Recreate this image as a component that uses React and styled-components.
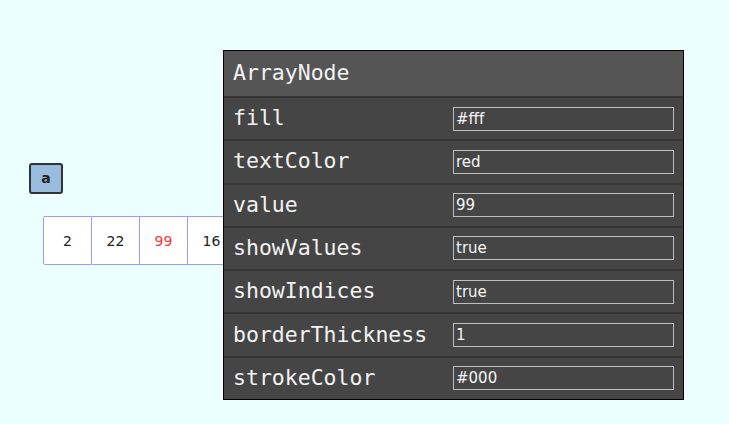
import React from "react";
import styled, { createGlobalStyle } from "styled-components";

const Global = createGlobalStyle`
  html, body { margin: 0; padding: 0; }
  body {
    width: 729px;
    height: 424px;
    overflow: hidden;
    background: #eafffe;
    font-family: "DejaVu Sans", sans-serif;
  }
`;

const Canvas = styled.div`
  position: relative;
  width: 729px;
  height: 424px;
`;

const LabelNode = styled.div`
  position: absolute;
  left: ${(p) => p.x}px;
  top: ${(p) => p.y}px;
  width: 30px;
  height: 25px;
  box-sizing: content-box;
  background: #99bbdd;
  border: 2px solid #333;
  border-radius: 3px;
  display: flex;
  align-items: center;
  justify-content: center;
  font-family: "DejaVu Sans", sans-serif;
  font-weight: bold;
  font-size: 14px;
  color: #222;
  padding-bottom: 2px;
`;

const ArrayRow = styled.div`
  position: absolute;
  left: ${(p) => p.x}px;
  top: ${(p) => p.y}px;
  display: flex;
`;

const Cell = styled.div`
  width: 47px;
  height: 47px;
  background: #fff;
  border: 1.5px solid #9a9aff;
  border-left-width: ${(p) => (p.first ? "1.5px" : "0")};
  border-radius: ${(p) => (p.first ? "2px 0 0 2px" : "0")};
  display: flex;
  align-items: center;
  justify-content: center;
  font-family: "DejaVu Sans", sans-serif;
  font-size: 14px;
  color: ${(p) => p.color || "#222"};
`;

const Panel = styled.div`
  position: absolute;
  left: 223px;
  top: 50px;
  width: 459px;
  height: 348px;
  border: 1px solid #000;
  background: #444;
  display: flex;
  flex-direction: column;
  font-family: "DejaVu Sans Mono", monospace;
  color: #f2f2f2;
`;

const Header = styled.div`
  height: 45px;
  flex: none;
  box-sizing: border-box;
  background: #555;
  display: flex;
  align-items: center;
  padding: 0 0 2px 9px;
  font-size: 21.5px;
`;

const Row = styled.div`
  flex: 1;
  display: grid;
  grid-template-columns: 229px 1fr;
  align-items: center;
  border-top: 2px solid #353535;
  background: #454545;
`;

const Label = styled.div`
  padding: 0 0 2px 9px;
  font-size: 21.5px;
  white-space: nowrap;
`;

const Input = styled.input`
  width: 221px;
  height: 24px;
  box-sizing: border-box;
  margin: 0;
  padding: 0 2px;
  background: #454545;
  border: 1px solid #bdbdbd;
  border-radius: 0;
  color: #f5f5f5;
  font-family: "DejaVu Sans", sans-serif;
  font-size: 15px;
  outline: none;
`;

const values = [2, 22, 99, 16];
const props = [
  ["fill", "#fff"],
  ["textColor", "red"],
  ["value", "99"],
  ["showValues", "true"],
  ["showIndices", "true"],
  ["borderThickness", "1"],
  ["strokeColor", "#000"],
];

export default function App() {
  return (
    <Canvas>
      <Global />
      <LabelNode x={29} y={163}>a</LabelNode>
      <ArrayRow x={43} y={216}>
        {values.map((v, i) => (
          <Cell key={i} first={i === 0} color={v === 99 ? "#ff3333" : undefined}>
            {v}
          </Cell>
        ))}
      </ArrayRow>
      <Panel>
        <Header>ArrayNode</Header>
        {props.map(([k, v]) => (
          <Row key={k}>
            <Label>{k}</Label>
            <Input defaultValue={v} readOnly />
          </Row>
        ))}
      </Panel>
    </Canvas>
  );
}
